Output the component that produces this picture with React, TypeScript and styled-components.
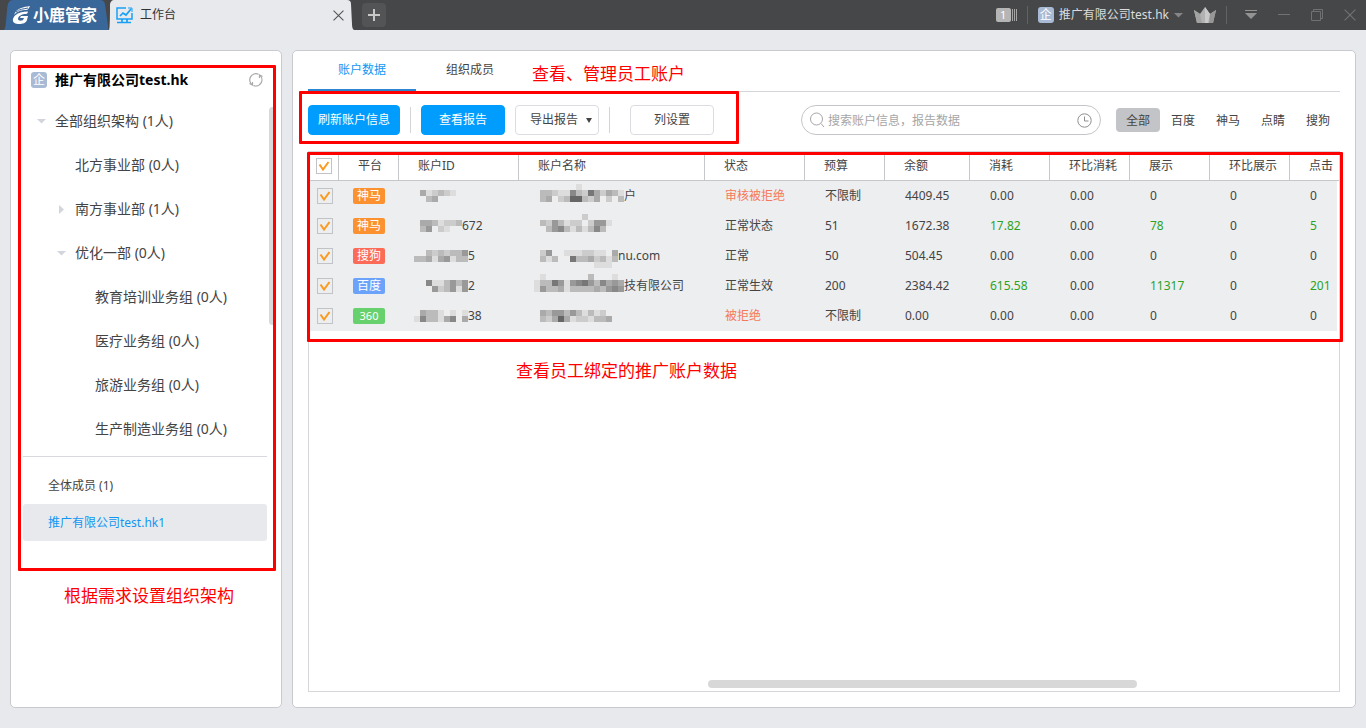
import React from "react";
import styled, { createGlobalStyle, css } from "styled-components";

const GlobalStyle = createGlobalStyle`
  *, *::before, *::after { box-sizing: border-box; }
  body {
    margin: 0;
    background: #e8e9ed;
    color: #444;
    font: 12px/16px "Noto Sans", "Noto Sans CJK SC", sans-serif;
  }
  button, input { font: inherit; color: inherit; }
  button { padding: 0; border: 0; background: none; cursor: pointer; }
  svg { display: block; flex: none; }
`;

const Window = styled.div`
  display: flex;
  flex-direction: column;
  min-height: 100vh;
`;

/* ---------- Title bar ---------- */

const TitleBar = styled.header`
  display: flex;
  align-items: center;
  height: 30px;
  padding: 0 10px 0 4px;
  background: #464749;
`;

const Brand = styled.a`
  display: flex;
  align-items: center;
  gap: 2px;
  width: 105px;
  height: 30px;
  padding-left: 8px;
  color: #fff;
  background: #3a6799;
  clip-path: path("M0 30 C3 28 2 5 5 2 Q6 0 9 0 H96 Q100 0 101 4 L104 26 Q104 29 105 30 Z");
  font-size: 16px;
  line-height: 30px;
  font-weight: 700;
  text-decoration: none;
  white-space: nowrap;
`;

const PageTab = styled.div`
  display: flex;
  align-items: center;
  width: 245px;
  height: 30px;
  padding: 0 10px 0 7px;
  background: #e8e9ed;
  color: #333;
  clip-path: path("M0 30 Q1 29 1 4 Q2 0 5 0 H238 Q242 0 242 4 L243 24 Q243 29 245 30 Z");
`;

const TabTitle = styled.span`
  flex: 1;
  padding-left: 7px;
`;

const AddTab = styled.button`
  display: grid;
  place-items: center;
  width: 24px;
  height: 24px;
  margin-left: 8px;
  border-radius: 4px;
  background: #535456;
`;

const WindowTools = styled.div`
  display: flex;
  align-items: center;
  margin-left: auto;
`;

const ToolDivider = styled.span`
  width: 1px;
  height: 18px;
  margin: 0 10px;
  background: #626365;
`;

const MessageCount = styled.button`
  display: flex;
  align-items: center;
  gap: 1px;
  color: #fff;
`;

const Count = styled.span`
  width: 15px;
  height: 14px;
  border-radius: 2px;
  background: #b5b5b5;
  font-size: 11px;
  line-height: 14px;
`;

const AccountMenu = styled.button`
  display: flex;
  align-items: center;
  gap: 5px;
  margin-right: 11px;
  color: #dcdcdc;
`;

const CompanyIcon = styled.span`
  display: grid;
  place-items: center;
  flex: none;
  width: 16px;
  height: 16px;
  border-radius: 3px;
  background: #a9bad5;
  color: #fff;
  font-size: 12px;
  font-weight: 400;
  line-height: 16px;
`;

const WindowButtons = styled.div`
  display: flex;
  align-items: center;
  gap: 21px;
  padding-left: 8px;
`;

/* ---------- Panels ---------- */

const Workspace = styled.main`
  display: flex;
  flex: 1;
  gap: 10px;
  padding: 20px 10px;
`;

const panel = css`
  border: 1px solid #c9cacf;
  border-radius: 5px;
  background: #fff;
`;

const Sidebar = styled.aside`
  ${panel}
  flex: none;
  width: 272px;
  padding: 14px 5px 0 7px;
`;

const Content = styled.section`
  ${panel}
  display: flex;
  flex: 1;
  flex-direction: column;
  min-width: 0;
  padding: 0 15px 15px;
`;

const Marked = styled.div`
  position: relative;
`;

const Outline = styled.div<{ $inset?: string }>`
  position: absolute;
  inset: ${(p) => p.$inset ?? "0"};
  border: 3px solid #f00;
  border-radius: 1px;
  pointer-events: none;
`;

const Note = styled.p`
  margin: 0;
  color: #f00;
  font-size: 17px;
  line-height: 24px;
  white-space: nowrap;
`;

const SidebarNote = styled(Note)`
  padding: 13px 0 0 46px;
`;

const TabsNote = styled(Note)`
  padding: 11px 0 0 8px;
`;

const TableNote = styled(Note)`
  padding: 28px 0 0 207px;
`;

/* ---------- Sidebar ---------- */

const CompanyRow = styled.h1`
  display: flex;
  align-items: center;
  gap: 8px;
  height: 34px;
  margin: 0;
  padding: 0 12px 5px 13px;
  color: #000;
  font-size: 14px;
  line-height: 20px;
`;

const CompanyName = styled.span`
  flex: 1;
`;

const TreeBox = styled.div`
  display: flex;
  justify-content: space-between;
  margin: 0 0 0 5px;
`;

const Tree = styled.ul`
  margin: 0;
  padding: 0 0 5px;
  list-style: none;
  font-size: 14px;
`;

const TreeItem = styled.li<{ $level: number }>`
  display: flex;
  align-items: center;
  gap: 9px;
  height: 44px;
  padding-left: ${(p) => 14 + p.$level * 20}px;
  line-height: 20px;
  white-space: nowrap;
`;

const Twisty = styled.button`
  display: grid;
  place-items: center;
  width: 9px;
  height: 20px;
`;

const TwistySpace = styled.span`
  width: 9px;
`;

const TreeThumb = styled.div`
  width: 7px;
  height: 218px;
  margin-top: 8px;
  border-radius: 4px;
  background: #d9d9d9;
`;

const Members = styled.div`
  margin: 0 9px 0 5px;
  padding: 10px 0 30px;
  border-top: 1px solid #d8d9dd;
`;

const MemberRow = styled.button<{ $selected?: boolean }>`
  display: block;
  width: 100%;
  height: 37px;
  padding-left: 25px;
  border-radius: 3px;
  background: ${(p) => (p.$selected ? "#e8e9ed" : "none")};
  color: ${(p) => (p.$selected ? "#1296f3" : "#444")};
  text-align: left;
`;

/* ---------- Content ---------- */

const TabBar = styled.nav`
  display: flex;
  height: 41px;
  border-bottom: 1px solid #d5d6d9;
`;

const ViewTab = styled.button<{ $active?: boolean }>`
  width: 108px;
  height: 40px;
  border-bottom: 2px solid ${(p) => (p.$active ? "#2b87d1" : "transparent")};
  color: ${(p) => (p.$active ? "#1296f3" : "#444")};
`;

const Toolbar = styled.div`
  display: flex;
  align-items: center;
  justify-content: space-between;
  height: 59px;
  padding-bottom: 3px;
`;

const Actions = styled(Marked)`
  display: flex;
  align-items: center;
`;

const ActionButton = styled.button<{ $primary?: boolean; $wide?: boolean; $menu?: boolean }>`
  display: flex;
  align-items: center;
  justify-content: center;
  gap: 8px;
  width: ${(p) => (p.$wide ? 92 : 84)}px;
  height: 30px;
  padding-left: ${(p) => (p.$menu ? 8 : 0)}px;
  border: 1px solid ${(p) => (p.$primary ? "#009dff" : "#dcdde2")};
  border-radius: 4px;
  background: ${(p) => (p.$primary ? "#009dff" : "#fff")};
  color: ${(p) => (p.$primary ? "#fff" : "#444")};
  white-space: nowrap;

  & + & { margin-left: 10px; }
`;

const ActionDivider = styled.span<{ $roomy?: boolean }>`
  width: 1px;
  height: 26px;
  margin: 0 ${(p) => (p.$roomy ? 20 : 10)}px 0 10px;
  background: #d3d4d8;
`;

const Filters = styled.div`
  display: flex;
  align-items: center;
  gap: 1px;
`;

const SearchBox = styled.label`
  display: flex;
  align-items: center;
  gap: 2px;
  width: 300px;
  height: 30px;
  margin-right: 14px;
  padding: 0 8px 0 7px;
  border: 1px solid #c4c5c9;
  border-radius: 15px;
`;

const SearchInput = styled.input`
  flex: 1;
  min-width: 0;
  padding: 1px 0 0;
  border: 0;
  outline: 0;
  background: none;
  &::placeholder { color: #a6a6a6; opacity: 1; }
`;

const PlatformFilter = styled.button<{ $active?: boolean }>`
  width: 44px;
  height: 24px;
  padding-top: 1px;
  border-radius: 4px;
  background: ${(p) => (p.$active ? "#c3c4c8" : "none")};
  white-space: nowrap;
`;

const TableFrame = styled.div`
  display: flex;
  flex: 1;
  flex-direction: column;
  border: 1px solid #d6d7da;
`;

const DataTable = styled.table`
  width: 100%;
  table-layout: fixed;
  border-collapse: separate;
  border-spacing: 0;
`;

const HeadCell = styled.th<{ $width?: number }>`
  width: ${(p) => (p.$width ? `${p.$width}px` : "auto")};
  height: 29px;
  padding: 0 0 0 19px;
  border-right: 1px solid #c6c7cb;
  border-bottom: 1px solid #c6c7cb;
  font-weight: 400;
  text-align: left;
  white-space: nowrap;

  &:first-child { padding: 0 0 0 7px; }
  &:last-child { border-right: 0; }
`;

const tones = { normal: "#444", bad: "#f5785a", up: "#2ba31f" };
type Tone = keyof typeof tones;

const Cell = styled.td<{ $tone?: Tone; $pad?: number }>`
  height: 30px;
  padding: 0 0 0 ${(p) => p.$pad ?? 20}px;
  background: #edeef0;
  color: ${(p) => tones[p.$tone ?? "normal"]};
  white-space: nowrap;

  &:last-child { border-right: 2px solid #fff; }
`;

const Badge = styled.span<{ $color: string; $small?: boolean }>`
  display: block;
  width: 32px;
  height: 16px;
  border-radius: 2px;
  background: ${(p) => p.$color};
  color: #fff;
  font-size: ${(p) => (p.$small ? 11 : 12)}px;
  text-align: center;
`;

const CheckWrap = styled.span`
  display: grid;
  place-items: center;
  width: 16px;
  height: 16px;
  & > * { grid-area: 1 / 1; }
  & > svg { pointer-events: none; visibility: hidden; }
  & > input:checked + svg { visibility: visible; }
`;

const CheckInput = styled.input`
  appearance: none;
  width: 16px;
  height: 16px;
  margin: 0;
  border: 1px solid #c2c3c7;
  background: transparent;
`;

const Masked = styled.span`
  display: flex;
  align-items: center;
`;

const ScrollTrack = styled.div`
  display: flex;
  justify-content: center;
  margin-top: auto;
  padding: 0 202px 3px 399px;
`;

const ScrollThumb = styled.div`
  width: 100%;
  height: 8px;
  border-radius: 4px;
  background: #d8d8d8;
`;

/* ---------- Small drawings ---------- */

const BrandMark = () => (
  <svg width="19" height="18" viewBox="0 0 19 18" fill="none">
    <path d="M18 0C12 1 4 2 2 9c3-4 8-5 12-5 2 0 3-2 4-4Z" fill="#fff" />
    <path d="M16 5C9 5 3 7 1 13c-1 4 3 5 6 5 4 0 7-1 8-4l1-4H9l-1 2h4l-1 2c-1 1-5 1-5-1 0-3 4-5 8-5 1 0 2-1 2-3Z" fill="#fff" />
    <path d="M4 6c3-3 8-3 12-4M3 9c3-3 8-4 13-4" stroke="#3a6799" />
  </svg>
);

const WorkbenchIcon = () => (
  <svg width="17" height="17" viewBox="0 0 17 17" fill="none" stroke="#18a0f5">
    <path d="M10 1H1v11h15V6" strokeWidth="1.500" />
    <path d="M4 9l3-3 3 2 5-6" strokeWidth="1.700" />
    <path d="M12 1h4v4" />
    <path d="M6 12v3M11 12v3M1 15.500h14" strokeWidth="1.700" />
  </svg>
);

const CrossIcon = ({ size, color }: { size: number; color: string }) => (
  <svg width={size} height={size} viewBox="0 0 10 10" stroke={color} fill="none">
    <path d="M.5.5l9 9M9.500.5l-9 9" />
  </svg>
);

const RefreshIcon = () => (
  <svg width="16" height="16" viewBox="0 0 16 16" fill="none" stroke="#a8a8a8" strokeWidth="1.200">
    <path d="M4.500 13A6.200 6.200 0 0 1 10.500 2.200" />
    <path d="M11.500 2.900A6.200 6.200 0 0 1 5.500 13.600" />
    <path d="M1.500 11.500l3 1.500v-3M14.500 4.500l-3-1.500v3" />
  </svg>
);

const CrownIcon = () => (
  <svg width="22" height="16" viewBox="0 0 22 16">
    <path d="M0 3l6 4 5-7 5 7 6-4-3 13H3Z" fill="#b2b2b2" />
    <path d="M0 3l6 4 2 9H3Z" fill="#a2a2a2" />
    <path d="M11 0l5 7-2 9h-3Z" fill="#cacaca" />
    <path d="M22 3l-6 4-1 9h4Z" fill="#969696" />
  </svg>
);

const SearchIcon = () => (
  <svg width="17" height="16" viewBox="0 0 17 16" fill="none" stroke="#a6a6a6">
    <circle cx="7.500" cy="7" r="6" />
    <path d="M12 11.500l3 3.500" />
  </svg>
);

const ClockIcon = () => (
  <svg width="15" height="15" viewBox="0 0 15 15" fill="none" stroke="#8f8f8f">
    <circle cx="7.500" cy="7.500" r="6.700" />
    <path d="M7.500 3.500v4.500h4" />
  </svg>
);

const Triangle = ({ open, color = "#d3d5dc" }: { open: boolean; color?: string }) => (
  <svg width="9" height="9" viewBox="0 0 9 9" fill={color}>
    <path d={open ? "M0 2h9L4.500 6.500Z" : "M2 0v9l5-4.500Z"} />
  </svg>
);

/* Each digit is the grey level of one 6px block; a dot leaves the block empty. */
const Mosaic = ({ rows, cols }: { rows: string[]; cols: number }) => (
  <svg width={cols * 6} height="24" viewBox={`0 0 ${cols * 6} 24`} shapeRendering="crispEdges">
    {rows.flatMap((row, y) =>
      row.split("").map((g, x) =>
        g === "." ? null : (
          <rect key={`${x}-${y}`} x={x * 6} y={y * 6} width="6" height="6" fill={`#${g.repeat(3)}`} />
        )
      )
    )}
  </svg>
);

const Check = ({ label }: { label: string }) => (
  <CheckWrap>
    <CheckInput type="checkbox" defaultChecked aria-label={label} />
    <svg width="12" height="12" viewBox="0 0 12 12" fill="none" stroke="#fb9a20" strokeWidth="2">
      <path d="M1.500 4.500L5 9.500 10.500 2" />
    </svg>
  </CheckWrap>
);

/* ---------- Data ---------- */

const departments: { name: string; level: number; open?: boolean }[] = [
  { name: "全部组织架构 (1人)", level: 0, open: true },
  { name: "北方事业部 (0人)", level: 1 },
  { name: "南方事业部 (1人)", level: 1, open: false },
  { name: "优化一部 (0人)", level: 1, open: true },
  { name: "教育培训业务组 (0人)", level: 2 },
  { name: "医疗业务组 (0人)", level: 2 },
  { name: "旅游业务组 (0人)", level: 2 },
  { name: "生产制造业务组 (0人)", level: 2 },
];

const columns: [string, number?][] = [
  ["平台", 60],
  ["账户ID", 120],
  ["账户名称", 186],
  ["状态", 100],
  ["预算", 80],
  ["余额", 85],
  ["消耗", 80],
  ["环比消耗", 80],
  ["展示", 80],
  ["环比展示", 80],
  ["点击"],
];

type Value = string | [string, Tone];

interface Account {
  platform: string;
  color: string;
  idMask: string[];
  idCols: number;
  id: string;
  nameMask: string[];
  nameCols: number;
  name: string;
  values: Value[];
}

const accounts: Account[] = [
  {
    platform: "神马",
    color: "#fb922f",
    idMask: ["", "eadcbcd", "..ba"],
    idCols: 9,
    id: "",
    nameMask: [".......de", ".bbcdd8bc7acabd", ".ba.cb66bca.ceb"],
    nameCols: 15,
    name: "户",
    values: [["审核被拒绝", "bad"], "不限制", "4409.45", "0.00", "0.00", "0", "0", "0"],
  },
  {
    platform: "神马",
    color: "#fb922f",
    idMask: ["", ".aabdccb", "eb9.cd"],
    idCols: 8,
    id: "672",
    nameMask: ["...e....c", "ebc9bdcc.c99d", "..b98bdbdb8b"],
    nameCols: 15,
    name: "",
    values: ["正常状态", "51", "1672.38", ["17.82", "up"], "0.00", ["78", "up"], "0", ["5", "up"]],
  },
  {
    platform: "搜狗",
    color: "#fb6b58",
    idMask: ["", ".ebcbcbb9", "bbada9dbb"],
    idCols: 9,
    id: "5",
    nameMask: ["", ".c9..dddccddea", ".bdb.e7bbacbdb", "..........ddd"],
    nameCols: 14,
    name: "nu.com",
    values: ["正常", "50", "504.45", "0.00", "0.00", "0", "0", "0"],
  },
  {
    platform: "百度",
    color: "#6ba2fa",
    idMask: ["", ".e8ddb9b9", "..e9cb9d9"],
    idCols: 9,
    id: "2",
    nameMask: [".d.......b.e.d", "dbb79d9879b8a9a", "d9bbadbbbbab989"],
    nameCols: 15,
    name: "技有限公司",
    values: ["正常生效", "200", "2384.42", ["615.58", "up"], "0.00", ["11317", "up"], "0", ["201", "up"]],
  },
  {
    platform: "360",
    color: "#67d16e",
    idMask: ["", ".abbded.d", "d8bbda8ea"],
    idCols: 9,
    id: "38",
    nameMask: ["", ".ab99b9bdbdc.e", ".bca6adccdbba"],
    nameCols: 15,
    name: "",
    values: [["被拒绝", "bad"], "不限制", "0.00", "0.00", "0.00", "0", "0", "0"],
  },
];

const platforms = ["全部", "百度", "神马", "点睛", "搜狗"];

/* ---------- Page ---------- */

const Header = () => (
  <TitleBar>
    <Brand href="#">
      <BrandMark />
      小鹿管家
    </Brand>
    <PageTab>
      <WorkbenchIcon />
      <TabTitle>工作台</TabTitle>
      <button aria-label="关闭标签">
        <CrossIcon size={11} color="#555" />
      </button>
    </PageTab>
    <AddTab aria-label="新建标签">
      <svg width="12" height="12" viewBox="0 0 12 12" stroke="#c8c8c8" strokeWidth="2">
        <path d="M6 0v12M0 6h12" />
      </svg>
    </AddTab>
    <WindowTools>
      <MessageCount aria-label="消息">
        <Count>1</Count>
        <svg width="5" height="12" viewBox="0 0 5 12" stroke="#a5a5a5">
          <path d="M.5 0v12M2.500 0v12M4.500 0v12" />
        </svg>
      </MessageCount>
      <ToolDivider />
      <AccountMenu>
        <CompanyIcon>企</CompanyIcon>
        推广有限公司test.hk
        <Triangle open color="#858688" />
      </AccountMenu>
      <CrownIcon />
      <ToolDivider />
      <WindowButtons>
        <button aria-label="菜单">
          <svg width="12" height="10" viewBox="0 0 12 10" fill="#939393">
            <path d="M0 0h12v1H0ZM0 3h12L6 9Z" />
          </svg>
        </button>
        <button aria-label="最小化">
          <svg width="12" height="12" viewBox="0 0 12 12" stroke="#707173">
            <path d="M0 5.500h12" />
          </svg>
        </button>
        <button aria-label="还原">
          <svg width="12" height="12" viewBox="0 0 12 12" fill="none" stroke="#707173">
            <path d="M.5 2.500h9v9h-9ZM2.500 2.500v-2h9v9h-2" />
          </svg>
        </button>
        <button aria-label="关闭">
          <CrossIcon size={12} color="#707173" />
        </button>
      </WindowButtons>
    </WindowTools>
  </TitleBar>
);

const Organisation = () => (
  <Sidebar>
    <Marked>
      <CompanyRow>
        <CompanyIcon>企</CompanyIcon>
        <CompanyName>推广有限公司test.hk</CompanyName>
        <button aria-label="刷新">
          <RefreshIcon />
        </button>
      </CompanyRow>
      <TreeBox>
        <Tree>
          {departments.map((d) => (
            <TreeItem key={d.name} $level={d.level}>
              {d.open === undefined ? (
                <TwistySpace />
              ) : (
                <Twisty aria-label={d.name} aria-expanded={d.open}>
                  <Triangle open={d.open} />
                </Twisty>
              )}
              {d.name}
            </TreeItem>
          ))}
        </Tree>
        <TreeThumb />
      </TreeBox>
      <Members>
        <MemberRow>全体成员 (1)</MemberRow>
        <MemberRow $selected>推广有限公司test.hk1</MemberRow>
      </Members>
      <Outline />
    </Marked>
    <SidebarNote>根据需求设置组织架构</SidebarNote>
  </Sidebar>
);

const Accounts = () => (
  <DataTable>
    <thead>
      <tr>
        <HeadCell $width={30}>
          <Check label="全选" />
        </HeadCell>
        {columns.map(([name, width]) => (
          <HeadCell key={name} $width={width}>
            {name}
          </HeadCell>
        ))}
      </tr>
    </thead>
    <tbody>
      {accounts.map((a, i) => (
        <tr key={i}>
          <Cell $pad={8}>
            <Check label={`选择账户 ${i + 1}`} />
          </Cell>
          <Cell $pad={14}>
            <Badge $color={a.color} $small={a.platform === "360"}>
              {a.platform}
            </Badge>
          </Cell>
          <Cell $pad={15}>
            <Masked>
              <Mosaic rows={a.idMask} cols={a.idCols} />
              {a.id}
            </Masked>
          </Cell>
          <Cell $pad={15}>
            <Masked>
              <Mosaic rows={a.nameMask} cols={a.nameCols} />
              {a.name}
            </Masked>
          </Cell>
          {a.values.map((v, j) => {
            const [text, tone] = typeof v === "string" ? [v, undefined] : v;
            return (
              <Cell key={j} $tone={tone as Tone | undefined}>
                {text}
              </Cell>
            );
          })}
        </tr>
      ))}
    </tbody>
  </DataTable>
);

export default function App() {
  return (
    <Window>
      <GlobalStyle />
      <Header />
      <Workspace>
        <Organisation />
        <Content>
          <TabBar>
            <ViewTab $active>账户数据</ViewTab>
            <ViewTab>组织成员</ViewTab>
            <TabsNote>查看、管理员工账户</TabsNote>
          </TabBar>
          <Toolbar>
            <Actions>
              <ActionButton $primary $wide>刷新账户信息</ActionButton>
              <ActionDivider />
              <ActionButton $primary>查看报告</ActionButton>
              <ActionButton $menu>
                导出报告
                <svg width="6" height="6" viewBox="0 0 6 6" fill="#444">
                  <path d="M0 1h6L3 6Z" />
                </svg>
              </ActionButton>
              <ActionDivider $roomy />
              <ActionButton>列设置</ActionButton>
              <Outline $inset="-14px -25px -9px -9px" />
            </Actions>
            <Filters>
              <SearchBox>
                <SearchIcon />
                <SearchInput type="text" aria-label="搜索" placeholder="搜索账户信息，报告数据" />
                <ClockIcon />
              </SearchBox>
              {platforms.map((p, i) => (
                <PlatformFilter key={p} $active={i === 0}>
                  {p}
                </PlatformFilter>
              ))}
            </Filters>
          </Toolbar>
          <TableFrame>
            <Marked>
              <Accounts />
              <Outline $inset="0 -4px -11px -2px" />
            </Marked>
            <TableNote>查看员工绑定的推广账户数据</TableNote>
            <ScrollTrack>
              <ScrollThumb />
            </ScrollTrack>
          </TableFrame>
        </Content>
      </Workspace>
    </Window>
  );
}
